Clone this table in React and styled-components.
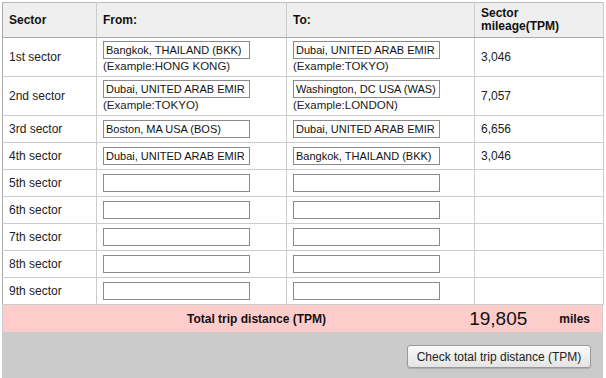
import React from 'react';
import styled, { createGlobalStyle } from 'styled-components';

const GlobalStyle = createGlobalStyle`
  body {
    margin: 0;
    background: #fff;
    font-family: "Liberation Sans", Arial, sans-serif;
    font-size: 12px;
    color: #222;
  }
`;

const Wrap = styled.div`
  width: 601px;
  margin: 2px 0 0 2px;
`;

const Table = styled.table`
  width: 100%;
  border-collapse: collapse;
  table-layout: fixed;
  border-left: 1px solid #aaa;
  border-right: 1px solid #ccc;
  border-top: 1px solid #bbb;
`;

const Head = styled.th`
  background: #efefef;
  text-align: left;
  font-weight: bold;
  font-size: 12px;
  line-height: 13px;
  color: #111;
  height: 35px;
  padding: 0 6px;
  border-right: 1px solid #ccc;
  border-bottom: 1px solid #aaa;
  vertical-align: middle;
  width: ${p => p.$w}px;
  box-sizing: border-box;
`;

const Cell = styled.td`
  height: ${p => (p.$tall ? 39 : 27)}px;
  padding: 0 6px;
  border-right: 1px solid #ccc;
  border-bottom: 1px solid #ccc;
  vertical-align: middle;
  color: #222;
  box-sizing: border-box;
`;

const Input = styled.input`
  display: block;
  box-sizing: border-box;
  width: 147px;
  height: 18px;
  margin: 0;
  padding: 0 2px;
  border: 1px solid #8a8a8a;
  font-family: "Liberation Sans", Arial, sans-serif;
  font-size: 11px;
  color: #111;
  background: #fff;
  outline: none;
`;

const Example = styled.div`
  font-size: 11.5px;
  line-height: 14px;
  color: #222;
`;

const TotalBar = styled.div`
  display: flex;
  align-items: center;
  height: 28px;
  background: #ffcccc;
  border: 1px solid #ccc;
  border-top: none;
  box-sizing: border-box;
  font-weight: bold;
`;

const TotalLabel = styled.span`
  margin-left: 184px;
  font-size: 12px;
  color: #111;
`;

const TotalValue = styled.span`
  margin-left: auto;
  font-weight: normal;
  font-size: 19px;
  color: #111;
`;

const Miles = styled.span`
  margin: 0 12px 0 32px;
  font-size: 12px;
  color: #111;
`;

const Footer = styled.div`
  display: flex;
  justify-content: flex-end;
  background: #cbcbcb;
  height: 46px;
  padding: 12px 12px 0 0;
  box-sizing: border-box;
`;

const CheckButton = styled.button`
  width: 184px;
  height: 23px;
  border: 1px solid #9a9a9a;
  border-radius: 3px;
  background: linear-gradient(#fafafa, #e4e4e4);
  box-shadow: 0 1px 1px rgba(0, 0, 0, 0.15);
  font-family: "Liberation Sans", Arial, sans-serif;
  font-size: 12px;
  color: #222;
  padding: 0;
`;

const sectors = [
  { label: '1st sector', from: 'Bangkok, THAILAND (BKK)', fromEx: 'HONG KONG', to: 'Dubai, UNITED ARAB EMIR', toEx: 'TOKYO', miles: '3,046' },
  { label: '2nd sector', from: 'Dubai, UNITED ARAB EMIR', fromEx: 'TOKYO', to: 'Washington, DC USA (WAS)', toEx: 'LONDON', miles: '7,057' },
  { label: '3rd sector', from: 'Boston, MA USA (BOS)', to: 'Dubai, UNITED ARAB EMIR', miles: '6,656' },
  { label: '4th sector', from: 'Dubai, UNITED ARAB EMIR', to: 'Bangkok, THAILAND (BKK)', miles: '3,046' },
  { label: '5th sector' },
  { label: '6th sector' },
  { label: '7th sector' },
  { label: '8th sector' },
  { label: '9th sector' },
];

function Place({ value, example }) {
  return (
    <>
      <Input defaultValue={value || ''} />
      {example && <Example>(Example:{example})</Example>}
    </>
  );
}

export default function App() {
  return (
    <Wrap>
      <GlobalStyle />
      <Table>
        <thead>
          <tr>
            <Head $w={94}>Sector</Head>
            <Head $w={190}>From:</Head>
            <Head $w={188}>To:</Head>
            <Head $w={129}>Sector<br />mileage(TPM)</Head>
          </tr>
        </thead>
        <tbody>
          {sectors.map(s => {
            const tall = !!(s.fromEx || s.toEx);
            return (
              <tr key={s.label}>
                <Cell $tall={tall}>{s.label}</Cell>
                <Cell $tall={tall}><Place value={s.from} example={s.fromEx} /></Cell>
                <Cell $tall={tall}><Place value={s.to} example={s.toEx} /></Cell>
                <Cell $tall={tall}>{s.miles}</Cell>
              </tr>
            );
          })}
        </tbody>
      </Table>
      <TotalBar>
        <TotalLabel>Total trip distance (TPM)</TotalLabel>
        <TotalValue>19,805</TotalValue>
        <Miles>miles</Miles>
      </TotalBar>
      <Footer>
        <CheckButton>Check total trip distance (TPM)</CheckButton>
      </Footer>
    </Wrap>
  );
}
